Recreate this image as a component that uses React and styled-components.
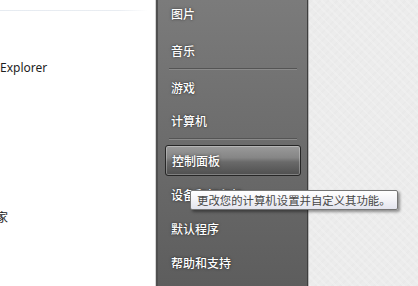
import React from "react";
import styled, { createGlobalStyle } from "styled-components";

const Global = createGlobalStyle`
  html, body { margin: 0; padding: 0; background: #fff; }
  body { font-family: "Noto Sans", "Noto Sans CJK SC", sans-serif; }
`;

const Screen = styled.div`
  display: flex;
  width: 418px;
  height: 286px;
  overflow: hidden;
`;

const LeftPane = styled.div`
  width: 155px;
  flex: none;
  background: #ffffff;
  border-right: 1px solid #d4d4d4;
  display: flex;
  flex-direction: column;
  overflow: hidden;
`;

const TopRule = styled.div`
  margin-top: 10px;
  margin-right: 7px;
  height: 1px;
  background: linear-gradient(to right, #e6ebf1, #e9edf2 80%, rgba(233, 237, 242, 0));
`;

const PaneText = styled.div`
  font-family: "Noto Sans", "Noto Sans CJK SC", sans-serif;
  font-size: 12px;
  line-height: 16px;
  color: #1e1e1e;
  white-space: nowrap;
  margin-top: ${(p) => p.$top}px;
  margin-left: ${(p) => p.$left || 0}px;
`;

const MenuPanel = styled.div`
  width: 149px;
  flex: none;
  border-left: 2px solid #505050;
  border-right: 1px solid #3e3e3e;
  background: linear-gradient(to bottom, #7b7b7b 0%, #6c6c6c 50%, #5d5d5d 100%);
  display: flex;
  flex-direction: column;
  position: relative;
`;

const Item = styled.div`
  position: relative;
  height: ${(p) => p.$h || 33}px;
  margin-top: ${(p) => p.$mt || 0}px;
  display: flex;
  align-items: center;
  padding-left: 13px;
  font-family: "Noto Sans CJK SC", sans-serif;
  font-size: 12px;
  font-weight: 500;
  color: #ffffff;
  text-shadow: 0 0 3px rgba(0, 0, 0, 0.55), 0 0 1px rgba(0, 0, 0, 0.4);
  white-space: nowrap;
`;

const Separator = styled.div`
  height: 1px;
  margin: ${(p) => p.$mt || 1}px 10px ${(p) => p.$mb || 2}px 11px;
  background: #545454;
  border-bottom: 1px solid #8a8a8a;
`;

const Highlight = styled.div`
  height: 29px;
  margin: 4px 6px 0 7px;
  border: 1px solid #262626;
  border-radius: 3px;
  box-shadow: inset 0 0 0 1px rgba(255, 255, 255, 0.28);
  background: linear-gradient(
    to bottom,
    #9a9a9a 0%,
    #868686 40%,
    #6a6a6a 55%,
    #4f4f4f 100%
  );
  display: flex;
  align-items: center;
  padding-left: 6px;
  font-family: "Noto Sans CJK SC", sans-serif;
  font-size: 12px;
  font-weight: 500;
  color: #ffffff;
  text-shadow: 0 0 3px rgba(0, 0, 0, 0.6);
`;

const Tooltip = styled.div`
  position: absolute;
  left: 32px;
  top: 13px;
  width: 200px;
  height: 18px;
  padding-left: 6px;
  display: flex;
  align-items: center;
  background: linear-gradient(to bottom, #ffffff 0%, #f3f3f7 50%, #e3e4ee 100%);
  border: 1px solid #767676;
  border-radius: 2px;
  box-shadow: 2px 2px 3px rgba(0, 0, 0, 0.4);
  font-family: "Noto Sans CJK SC", sans-serif;
  font-size: 11.4px;
  font-weight: 400;
  color: #474747;
  text-shadow: none;
  z-index: 2;
`;

const RightPane = styled.div`
  flex: 1;
  border-left: 1px solid #b8b8b8;
  background-color: #ececec;
  background-image:
    repeating-linear-gradient(45deg, rgba(255, 255, 255, 0.18) 0 2px, transparent 2px 6px),
    repeating-linear-gradient(-45deg, rgba(215, 215, 215, 0.12) 0 2px, transparent 2px 6px);
`;

export default function App() {
  return (
    <>
      <Global />
      <Screen>
        <LeftPane>
          <TopRule />
          <PaneText $top={49}>Explorer</PaneText>
          <PaneText $top={134} $left={-4}>家</PaneText>
        </LeftPane>
        <MenuPanel>
          <Item $mt={-3}>图片</Item>
          <Item $mt={4}>音乐</Item>
          <Separator $mt={1} $mb={1} />
          <Item>游戏</Item>
          <Item>计算机</Item>
          <Separator $mt={0} $mb={1} />
          <Highlight>控制面板</Highlight>
          <Item $mt={1} $h={34}>
            设备和打印机
            <Tooltip>更改您的计算机设置并自定义其功能。</Tooltip>
          </Item>
          <Item $h={34}>默认程序</Item>
          <Item $h={34}>帮助和支持</Item>
        </MenuPanel>
        <RightPane />
      </Screen>
    </>
  );
}
